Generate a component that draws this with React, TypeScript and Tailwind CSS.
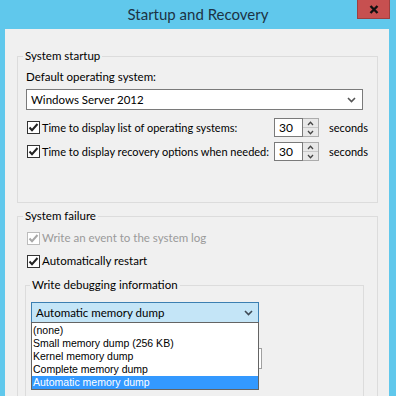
import React from "react";

function Check({ disabled = false }: { disabled?: boolean }) {
  return (
    <div
      className={
        "w-[13px] h-[13px] shrink-0 border bg-white flex items-center justify-center " +
        (disabled ? "border-[#bcbcbc]" : "border-[#333333]")
      }
    >
      <svg width="11" height="11" viewBox="0 0 11 11">
        <path
          d="M1.5 5.5 L4 8.2 L9.5 2"
          fill="none"
          stroke={disabled ? "#a8a8a8" : "#222222"}
          strokeWidth="2"
        />
      </svg>
    </div>
  );
}

function Chevron({ color = "#555555" }: { color?: string }) {
  return (
    <svg width="9" height="6" viewBox="0 0 9 6">
      <path d="M1 1 L4.5 4.5 L8 1" fill="none" stroke={color} strokeWidth="1.6" />
    </svg>
  );
}

function Spin() {
  return (
    <div className="flex h-[19px]">
      <div className="w-[29px] h-[19px] border border-[#7a7a7a] bg-white flex items-center pl-[4px] text-[12px]">
        30
      </div>
      <div className="w-[16px] h-[19px] flex flex-col border-y border-r border-[#acacac]">
        <div className="flex-1 bg-[#e8e8e8] border-b border-[#c8c8c8] flex items-center justify-center">
          <svg width="7" height="5" viewBox="0 0 7 5">
            <path d="M1 4 L3.5 1.3 L6 4" fill="none" stroke="#444" strokeWidth="1.3" />
          </svg>
        </div>
        <div className="flex-1 bg-[#e8e8e8] flex items-center justify-center">
          <svg width="7" height="5" viewBox="0 0 7 5">
            <path d="M1 1 L3.5 3.7 L6 1" fill="none" stroke="#444" strokeWidth="1.3" />
          </svg>
        </div>
      </div>
    </div>
  );
}

export default function App() {
  return (
    <div className="w-[396px] h-[396px] overflow-hidden bg-[#60c8ec] flex flex-col font-['Lato','Noto_Sans',sans-serif] text-[11px] text-black leading-[16px]">
      {/* Title bar */}
      <div className="h-[29px] shrink-0 relative flex items-center justify-center">
        <span className="text-[15px] text-[#1c3344] mt-[-1px]">Startup and Recovery</span>
        <div className="absolute right-[6px] top-0 w-[33px] h-[19px] bg-[#c75050] border-x border-b border-[#9c4040] flex items-center justify-center">
          <svg width="10" height="9" viewBox="0 0 10 9">
            <path d="M1.5 1 L8.5 8 M8.5 1 L1.5 8" stroke="#111" strokeWidth="2.4" />
          </svg>
        </div>
      </div>

      {/* Client area */}
      <div className="flex-1 ml-[5px] mr-[7px] bg-[#f0f0f0] pl-[12px] pr-[11px] pt-[19px]">
        {/* System startup */}
        <fieldset className="border border-[#dcdcdc] w-[361px]">
          <legend className="ml-[5px] px-[2px] leading-[16px] text-[11.5px]">System startup</legend>
          <div className="pl-[8px] pt-[5px] pb-[41px]">
            <div className="h-[16px] text-[11.5px]">Default operating system:</div>
            <div className="mt-[4px] w-[337px] h-[21px] border border-[#7a7a7a] bg-white flex items-center justify-between pl-[4px] pr-[6px] text-[11.5px]">
              <span>Windows Server 2012</span>
              <Chevron />
            </div>
            <div className="mt-[8px] flex items-center h-[19px]">
              <div className="w-[248px] flex items-center pl-[1px] whitespace-nowrap">
                <Check />
                <span className="ml-[2px]">Time to display list of operating systems:</span>
              </div>
              <Spin />
              <span className="ml-[10px]">seconds</span>
            </div>
            <div className="mt-[5px] flex items-center h-[19px]">
              <div className="w-[248px] flex items-center pl-[1px] whitespace-nowrap">
                <Check />
                <span className="ml-[2px]">Time to display recovery options when needed:</span>
              </div>
              <Spin />
              <span className="ml-[10px]">seconds</span>
            </div>
          </div>
        </fieldset>

        {/* System failure */}
        <fieldset className="border border-[#dcdcdc] w-[361px] mt-[5px]">
          <legend className="ml-[5px] px-[2px] leading-[16px] text-[11.5px]">System failure</legend>
          <div className="pl-[7px] pt-[6px] pb-[40px]">
            <div className="flex items-center h-[16px] pl-[2px]">
              <Check disabled />
              <span className="ml-[2px] text-[#9a9a9a] text-[11.5px]">Write an event to the system log</span>
            </div>
            <div className="mt-[7px] flex items-center h-[16px] pl-[2px]">
              <Check />
              <span className="ml-[2px] text-[11.5px]">Automatically restart</span>
            </div>

            <fieldset className="mt-[8px] border border-[#dcdcdc] w-[339px]">
              <legend className="ml-[4px] px-[2px] leading-[16px] text-[11.5px]">Write debugging information</legend>
              <div className="pl-[5px] pt-[9px] pb-[40px]">
                <div className="relative w-[228px]">
                  <div className="w-[228px] h-[21px] border border-[#3c7fb1] bg-[#c4e5f7] flex items-center justify-between pl-[4px] pr-[5px] text-[11.5px]">
                    <span>Automatic memory dump</span>
                    <Chevron color="#3f4a55" />
                  </div>
                  <div className="absolute left-0 top-[20px] w-[228px] bg-white border border-[#646464] z-10 font-['Liberation_Sans',sans-serif] text-[10.5px] leading-[13px] pt-[1px]">
                    <div className="h-[13px] px-[1px]">(none)</div>
                    <div className="h-[13px] px-[1px]">Small memory dump (256 KB)</div>
                    <div className="h-[13px] px-[1px]">Kernel memory dump</div>
                    <div className="h-[13px] px-[1px]">Complete memory dump</div>
                    <div className="h-[13px] px-[1px] bg-[#3399ff] text-white">Automatic memory dump</div>
                  </div>
                </div>
                <div className="mt-[25px] w-[231px] h-[21px] border border-[#a0a0a0] bg-white" />
              </div>
            </fieldset>
          </div>
        </fieldset>
      </div>
    </div>
  );
}
